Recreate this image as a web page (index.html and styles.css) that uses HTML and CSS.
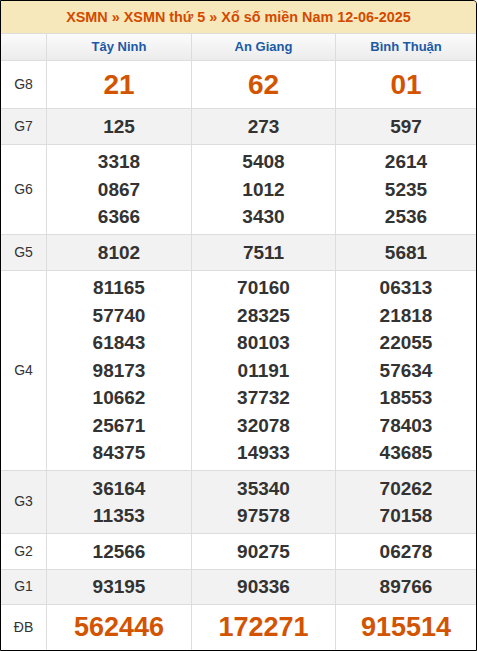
FILE: index.html
```html
<!DOCTYPE html>
<html lang="vi">
<head>
<meta charset="utf-8">
<title>XSMN 12-06-2025</title>
<link rel="stylesheet" href="styles.css">
</head>
<body>
<div class="board">
  <div class="title">XSMN » XSMN thứ 5 » Xổ số miền Nam 12-06-2025</div>
  <div class="row head">
    <div class="cell"></div>
    <div class="cell">Tây Ninh</div>
    <div class="cell">An Giang</div>
    <div class="cell">Bình Thuận</div>
  </div>
  <div class="row big">
    <div class="cell label">G8</div>
    <div class="cell">21</div>
    <div class="cell">62</div>
    <div class="cell">01</div>
  </div>
  <div class="row alt">
    <div class="cell label">G7</div>
    <div class="cell">125</div>
    <div class="cell">273</div>
    <div class="cell">597</div>
  </div>
  <div class="row">
    <div class="cell label">G6</div>
    <div class="cell">3318<br>0867<br>6366</div>
    <div class="cell">5408<br>1012<br>3430</div>
    <div class="cell">2614<br>5235<br>2536</div>
  </div>
  <div class="row alt">
    <div class="cell label">G5</div>
    <div class="cell">8102</div>
    <div class="cell">7511</div>
    <div class="cell">5681</div>
  </div>
  <div class="row">
    <div class="cell label">G4</div>
    <div class="cell">81165<br>57740<br>61843<br>98173<br>10662<br>25671<br>84375</div>
    <div class="cell">70160<br>28325<br>80103<br>01191<br>37732<br>32078<br>14933</div>
    <div class="cell">06313<br>21818<br>22055<br>57634<br>18553<br>78403<br>43685</div>
  </div>
  <div class="row alt">
    <div class="cell label">G3</div>
    <div class="cell">36164<br>11353</div>
    <div class="cell">35340<br>97578</div>
    <div class="cell">70262<br>70158</div>
  </div>
  <div class="row">
    <div class="cell label">G2</div>
    <div class="cell">12566</div>
    <div class="cell">90275</div>
    <div class="cell">06278</div>
  </div>
  <div class="row alt">
    <div class="cell label">G1</div>
    <div class="cell">93195</div>
    <div class="cell">90336</div>
    <div class="cell">89766</div>
  </div>
  <div class="row db">
    <div class="cell label">ĐB</div>
    <div class="cell">562446</div>
    <div class="cell">172271</div>
    <div class="cell">915514</div>
  </div>
</div>
</body>
</html>
```

FILE: styles.css
```css
html, body {
  margin: 0;
  padding: 0;
  background: #fff;
}

body {
  font-family: "Liberation Sans", Arial, sans-serif;
  color: #333;
}

.board {
  width: 475px;
  border: 1px solid #000;
  border-top-right-radius: 4px;
  display: flex;
  flex-direction: column;
  gap: 1px;
  background: #dddddd;
  overflow: hidden;
}

.title {
  height: 32px;
  line-height: 32px;
  background: #f7e8bb;
  color: #d34a00;
  font-weight: bold;
  font-size: 14.4px;
  text-align: center;
}

.row {
  display: grid;
  grid-template-columns: 45px 144px 143px 140px;
  gap: 1px;
}

.cell {
  background: #fff;
  text-align: center;
  font-weight: bold;
  font-size: 19px;
  line-height: 27.5px;
  padding: 3.5px 0;
  color: #333;
  display: flex;
  flex-direction: column;
  justify-content: center;
}

.row.alt .cell {
  background: #f2f2f2;
}

.cell.label {
  font-weight: normal;
  font-size: 14px;
  color: #333;
}

.row.head .cell {
  background: linear-gradient(#fbfbfb, #ececec);
  color: #1c5aa6;
  font-size: 13px;
  font-weight: bold;
  line-height: 26px;
  padding: 0;
}

.row.big .cell {
  font-size: 28px;
  line-height: 39px;
  padding: 4px 0;
  color: #d35400;
}

.row.db .cell {
  font-size: 27px;
  line-height: 37px;
  padding: 4px 0;
  color: #d35400;
}

.row.big .cell.label,
.row.db .cell.label {
  font-size: 14px;
  color: #333;
}
```
